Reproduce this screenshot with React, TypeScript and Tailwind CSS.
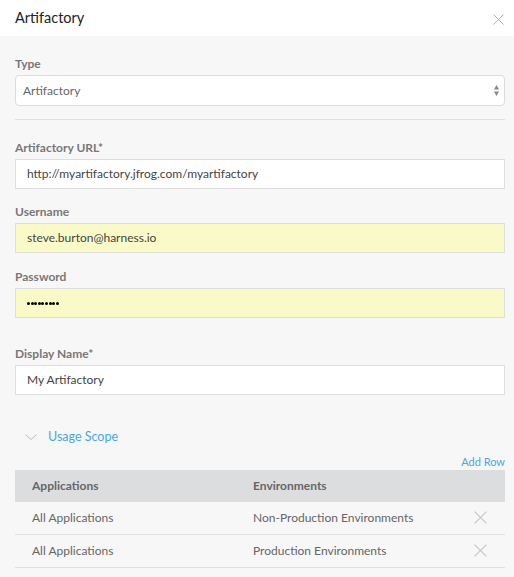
const font = { fontFamily: "Lato, 'Open Sans', sans-serif" };

function Label({ children }: { children: React.ReactNode }) {
  return (
    <div className="text-[12px] font-bold leading-[15px] text-[#777]">{children}</div>
  );
}

function Field({
  label,
  children,
  filled = false,
  className = "",
}: {
  label: string;
  children: React.ReactNode;
  filled?: boolean;
  className?: string;
}) {
  return (
    <div className={`flex flex-col gap-[4px] ${className}`}>
      <Label>{label}</Label>
      <div
        className={`flex h-[30px] items-center border border-[#dedede] px-[11px] text-[12px] text-[#444] ${
          filled ? "bg-[#fafac8]" : "bg-white"
        }`}
      >
        {children}
      </div>
    </div>
  );
}

function Cross({ size, color }: { size: number; color: string }) {
  return (
    <svg width={size} height={size} viewBox="0 0 12 12" fill="none" stroke={color} strokeWidth="1">
      <path d="M0.5 0.5 L11.5 11.5 M11.5 0.5 L0.5 11.5" />
    </svg>
  );
}

const scopes = [
  { app: "All Applications", env: "Non-Production Environments" },
  { app: "All Applications", env: "Production Environments" },
];

export default function App() {
  return (
    <div className="h-[577px] w-[514px] overflow-hidden bg-[#f7f7f7]" style={font}>
      <header className="flex h-[36px] items-center justify-between bg-white pl-[15px] pr-[10px]">
        <h1 className="text-[14.5px] text-[#222]">Artifactory</h1>
        <span className="mt-[2px]">
          <Cross size={11} color="#aaa" />
        </span>
      </header>

      <div className="pl-[15px] pr-[9px] pt-[20px]">
        <div className="flex flex-col gap-[4px]">
          <Label>Type</Label>
          <div className="flex h-[31px] items-center justify-between rounded-[4px] border border-[#dcdcdc] bg-white pl-[7px] pr-[5px] text-[12px] text-[#666]">
            <span>Artifactory</span>
            <svg width="5" height="11" viewBox="0 0 5 11" className="fill-[#888]">
              <path d="M2.5 0 L5 4.5 L0 4.5 Z" />
              <path d="M0 6.5 L5 6.5 L2.5 11 Z" />
            </svg>
          </div>
        </div>

        <div className="mt-[13px] h-px bg-[#e2e2e2]" />

        <Field className="mt-[20px]" label="Artifactory URL*">
          http://myartifactory.jfrog.com/myartifactory
        </Field>
        <Field className="mt-[15px]" label="Username" filled>
          steve.burton@harness.io
        </Field>
        <Field className="mt-[16px]" label="Password" filled>
          <div className="flex gap-[0.6px]">
            {Array.from({ length: 9 }).map((_, i) => (
              <span key={i} className="h-[3px] w-[3px] rounded-full bg-black" />
            ))}
          </div>
        </Field>
        <Field className="mt-[28px]" label="Display Name*">
          My Artifactory
        </Field>

        <div className="mt-[32px] flex h-[20px] items-center gap-[11px] pl-[10px] text-[12.5px] text-[#4aa6df]">
          <svg width="12" height="6" viewBox="0 0 12 6" fill="none" stroke="#bbb" strokeWidth="1">
            <path d="M0.5 0.5 L6 5.5 L11.5 0.5" />
          </svg>
          <span>Usage Scope</span>
        </div>

        <div className="mt-[8px] text-right text-[11px] leading-[14px] text-[#4aa6df]">Add Row</div>

        <div className="mt-[1px] text-[12px]">
          <div className="flex h-[32px] items-center bg-[#dcdddf] font-bold text-[#666]">
            <span className="w-[238px] pl-[17px]">Applications</span>
            <span>Environments</span>
          </div>
          {scopes.map((row, i) => (
            <div
              key={i}
              className="flex h-[33px] items-center border-b border-[#e0e0e0] text-[#666]"
            >
              <span className="w-[238px] pl-[17px]">{row.app}</span>
              <span className="flex-1">{row.env}</span>
              <span className="mb-[2px] mr-[18px]">
                <Cross size={13} color="#c4c4c4" />
              </span>
            </div>
          ))}
        </div>
      </div>
    </div>
  );
}
